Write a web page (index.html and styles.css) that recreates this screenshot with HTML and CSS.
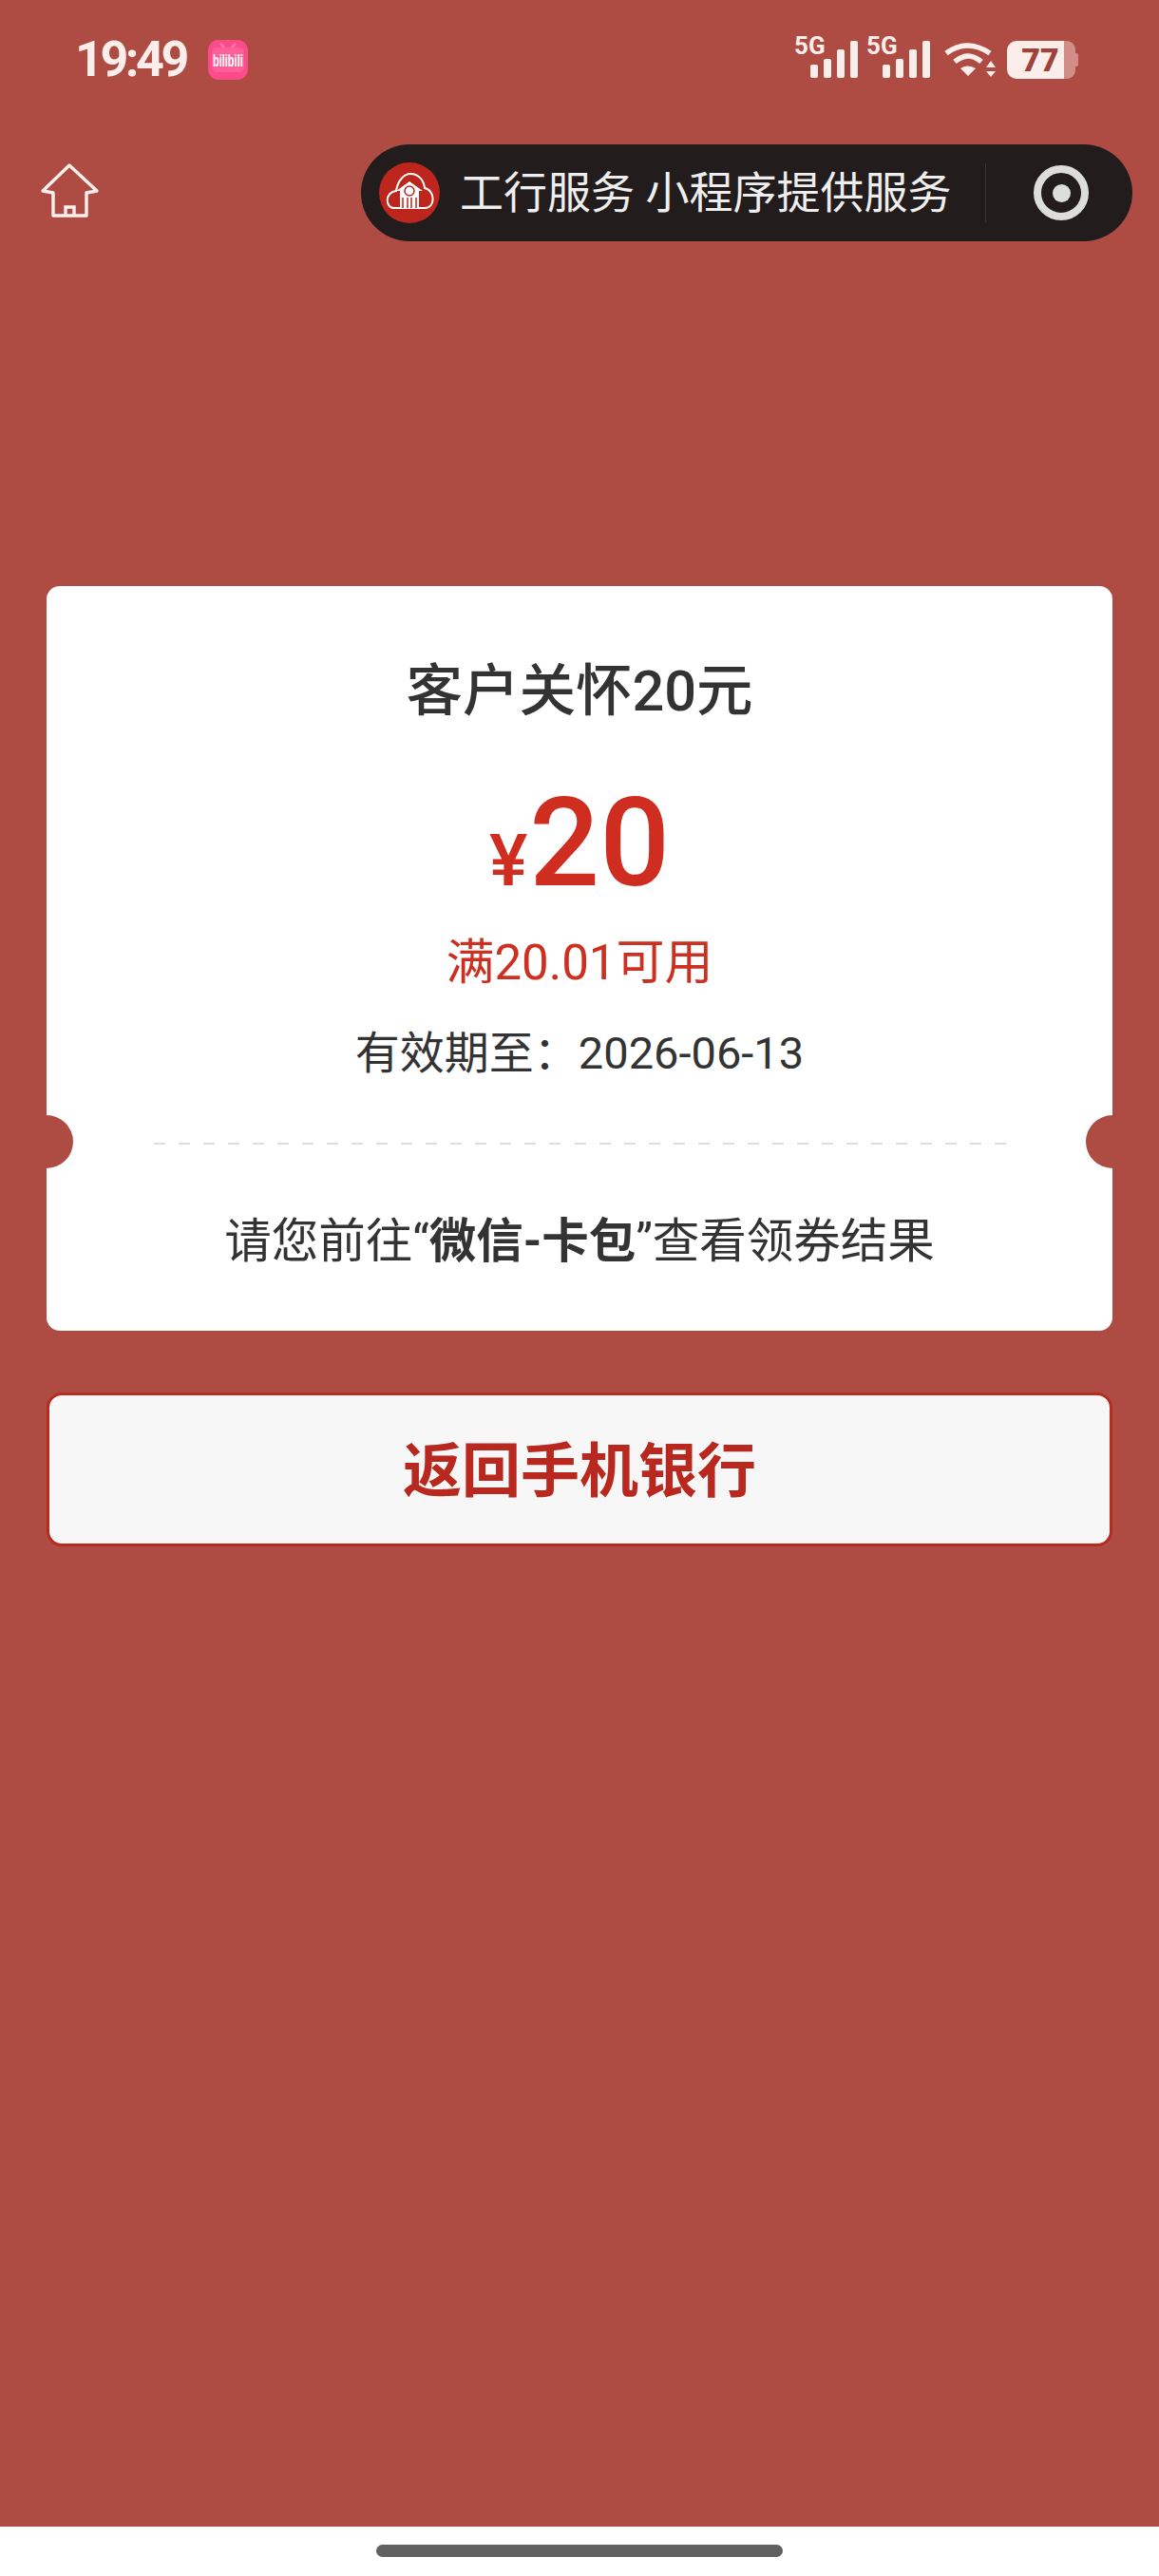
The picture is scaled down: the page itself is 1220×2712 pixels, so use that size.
FILE: index.html
```html
<!DOCTYPE html>
<html lang="zh-CN">
<head>
  <meta charset="UTF-8" />
  <title>客户关怀20元</title>
  <link rel="stylesheet" href="styles.css">
</head>
<body>
  <div class="page">
    <div class="status-bar">
      <div class="status-left">
        <span class="time">19:49</span>
        <svg class="app-icon" viewBox="0 0 42 42">
          <rect width="42" height="42" rx="11" fill="#fb4b8a"/>
          <path d="M13 4l4 4M29 4l-4 4" stroke="#ff86ae" stroke-width="2" fill="none"/>
          <rect x="4" y="8" width="34" height="26" rx="5" fill="#fd5f98"/>
          <text class="app-icon-text" transform="translate(5 28) scale(1 1.6)">bilibili</text>
        </svg>
      </div>
      <div class="status-right">
        <svg class="signal" viewBox="0 -6 68 52">
          <text class="signal-text" x="0" y="19">5G</text>
          <rect x="17" y="30" width="8" height="14" rx="2"/>
          <rect x="31" y="24" width="8" height="20" rx="2"/>
          <rect x="45" y="14" width="8" height="30" rx="2"/>
          <rect x="59" y="5" width="8" height="39" rx="2"/>
        </svg>
        <svg class="signal" viewBox="0 -6 68 52">
          <text class="signal-text" x="0" y="19">5G</text>
          <rect x="17" y="30" width="8" height="14" rx="2"/>
          <rect x="31" y="24" width="8" height="20" rx="2"/>
          <rect x="45" y="14" width="8" height="30" rx="2"/>
          <rect x="59" y="5" width="8" height="39" rx="2"/>
        </svg>
        <svg class="wifi" viewBox="0 0 56 40">
          <path d="M3 13Q25 -3 49 13" fill="none" stroke="#fbeeea" stroke-width="5.5"/>
          <path d="M12 22Q26 10 40 22" fill="none" stroke="#fbeeea" stroke-width="5.5"/>
          <path d="M18 29Q26 24 34 29L26 37Z" fill="#fbeeea"/>
          <path d="M50 21L55 28H45ZM45 32H55L50 38Z" fill="#fbeeea"/>
        </svg>
        <svg class="battery" viewBox="0 0 75 40">
          <path d="M60 0h3a9 9 0 0 1 9 9v22a9 9 0 0 1-9 9h-3z" fill="#d28d88"/>
          <path d="M72 13h1a2 2 0 0 1 2 2v10a2 2 0 0 1-2 2h-1z" fill="#d28d88"/>
          <path d="M10 0h50v40H10a10 10 0 0 1-10-10V10A10 10 0 0 1 10 0z" fill="#fbeeea"/>
          <text class="battery-text" x="35" y="32">77</text>
        </svg>
      </div>
    </div>

    <div class="nav">
      <svg class="home" viewBox="0 0 64 64">
        <path d="M32 3L4 30L15 32V56H50V32L61 30Z" fill="none" stroke="#fdf0ec" stroke-width="3.4" stroke-linejoin="round"/>
        <path d="M28 56V47H37V56" fill="none" stroke="#fdf0ec" stroke-width="3.4"/>
      </svg>
      <div class="capsule">
        <svg class="logo" viewBox="0 0 64 64">
          <circle cx="32" cy="32" r="32" fill="#bd261c"/>
          <path d="M16 48C6 48 6 31 18 30C20 18 27 12 33 12C41 12 47 18 48 27C59 29 60 48 48 48Z" fill="none" stroke="#fff" stroke-width="2"/>
          <path d="M18 30L32 20L46 30H42V48H22V30Z" fill="#fff"/>
          <circle cx="32" cy="30" r="5" fill="#fff" stroke="#bd261c" stroke-width="1.5"/>
          <path d="M25 37V48M30 37V48M34 37V48M39 37V48" stroke="#bd261c" stroke-width="1.5"/>
        </svg>
        <span class="capsule-title">工行服务 小程序提供服务</span>
        <span class="capsule-line"></span>
        <span class="target"><span class="target-dot"></span></span>
      </div>
    </div>

    <div class="card">
      <div class="card-title">客户关怀20元</div>
      <div class="amount"><span class="amount-sign">¥</span>20</div>
      <div class="condition">满20.01可用</div>
      <div class="expiry">有效期至：2026-06-13</div>
      <div class="cut">
        <span class="notch notch-left"></span>
        <span class="dashes"></span>
        <span class="notch notch-right"></span>
      </div>
      <div class="tip">请您前往“<b>微信-卡包</b>”查看领券结果</div>
    </div>

    <div class="back-btn">返回手机银行</div>

    <div class="spacer"></div>

    <div class="gesture-bar"><span class="handle"></span></div>
  </div>
</body>
</html>
```

FILE: styles.css
```css
* {
  box-sizing: border-box;
}
html, body {
  margin: 0;
  padding: 0;
}
body {
  font-family: Roboto, "Noto Sans CJK SC", sans-serif;
  background: #ae4c44;
  color: #333;
}
.page {
  width: 1220px;
  height: 2712px;
  display: flex;
  flex-direction: column;
  overflow: hidden;
}

/* status bar */
.status-bar {
  height: 126px;
  padding: 0 85px 0 79px;
  display: flex;
  align-items: center;
  justify-content: space-between;
  flex-shrink: 0;
}
.status-left {
  display: flex;
  align-items: center;
  gap: 23px;
}
.time {
  font-size: 52px;
  font-weight: 700;
  line-height: 60px;
  letter-spacing: -3.4px;
  color: #fbeeea;
}
.app-icon {
  width: 42px;
  height: 42px;
}
.app-icon-text {
  font-family: "Liberation Sans", sans-serif;
  font-size: 11px;
  font-weight: bold;
  fill: #fff;
}
.status-right {
  display: flex;
  align-items: center;
}
.signal {
  width: 68px;
  height: 52px;
  margin-right: 8px;
  margin-bottom: 10px;
  fill: #fbeeea;
}
.signal-text {
  font-family: Roboto, sans-serif;
  font-size: 26px;
  font-weight: bold;
  fill: #fbeeea;
}
.wifi {
  width: 56px;
  height: 40px;
  margin-left: 5px;
  margin-right: 11px;
}
.battery {
  width: 75px;
  height: 40px;
}
.battery-text {
  font-family: Roboto, sans-serif;
  font-size: 34px;
  font-weight: 900;
  text-anchor: middle;
  fill: #a0413a;
}

/* nav */
.nav {
  margin-top: 26px;
  height: 102px;
  padding: 0 28px 0 41px;
  display: flex;
  align-items: center;
  justify-content: space-between;
  flex-shrink: 0;
}
.home {
  width: 64px;
  height: 64px;
}
.capsule {
  width: 812px;
  height: 102px;
  background: #231c1c;
  border-radius: 51px;
  padding-left: 19px;
  display: flex;
  align-items: center;
}
.logo {
  width: 64px;
  height: 64px;
  flex-shrink: 0;
}
.capsule-title {
  margin-left: 21px;
  font-size: 46px;
  line-height: 60px;
  color: #eee;
  white-space: nowrap;
  width: 553px;
}
.capsule-line {
  width: 1px;
  height: 62px;
  background: #3c3434;
}
.target {
  margin-left: 50px;
  width: 58px;
  height: 58px;
  border: 8px solid #ddd;
  border-radius: 50%;
  display: flex;
  align-items: center;
  justify-content: center;
}
.target-dot {
  width: 19px;
  height: 19px;
  background: #ddd;
  border-radius: 50%;
}

/* card */
.card {
  margin: 363px 49px 0;
  height: 784px;
  background: #fff;
  border-radius: 14px;
  padding-top: 76px;
  text-align: center;
  flex-shrink: 0;
}
.card-title {
  font-size: 59.5px;
  font-weight: 500;
  line-height: 70px;
  color: #333;
}
.amount {
  margin-top: 60px;
  font-size: 130px;
  font-weight: 500;
  line-height: 130px;
  color: #cf2d1f;
}
.amount-sign {
  font-size: 76px;
  margin-right: 2px;
}
.condition {
  margin-top: 8px;
  font-size: 51px;
  line-height: 70px;
  color: #cc3020;
}
.expiry {
  margin-top: 25px;
  font-size: 47px;
  line-height: 70px;
  color: #333;
}
.cut {
  margin-top: 30px;
  height: 56px;
  display: flex;
  align-items: center;
  justify-content: space-between;
  overflow: hidden;
}
.notch {
  width: 56px;
  height: 56px;
  border-radius: 50%;
  background: #ae4c44;
  flex-shrink: 0;
}
.notch-left {
  margin-left: -28px;
}
.notch-right {
  margin-right: -28px;
}
.dashes {
  width: 897px;
  height: 2px;
  margin-top: 4px;
  background: repeating-linear-gradient(90deg, #ddd 0, #ddd 12px, transparent 12px, transparent 26.03px);
}
.tip {
  margin-top: 42px;
  font-size: 49.5px;
  line-height: 70px;
  color: #333;
}
.tip b {
  font-weight: 700;
}

/* button */
.back-btn {
  margin: 65px 49px 0;
  height: 162px;
  padding-bottom: 6px;
  background: #f7f7f7;
  border: 3px solid #b82a20;
  border-radius: 16px;
  font-size: 62px;
  font-weight: 700;
  color: #b8281e;
  display: flex;
  align-items: center;
  justify-content: center;
  flex-shrink: 0;
}
.spacer {
  flex: 1;
}
.gesture-bar {
  height: 52px;
  background: #fff;
  display: flex;
  justify-content: center;
  padding-top: 19px;
  flex-shrink: 0;
}
.handle {
  width: 428px;
  height: 13px;
  background: #616161;
  border-radius: 7px;
}
```
